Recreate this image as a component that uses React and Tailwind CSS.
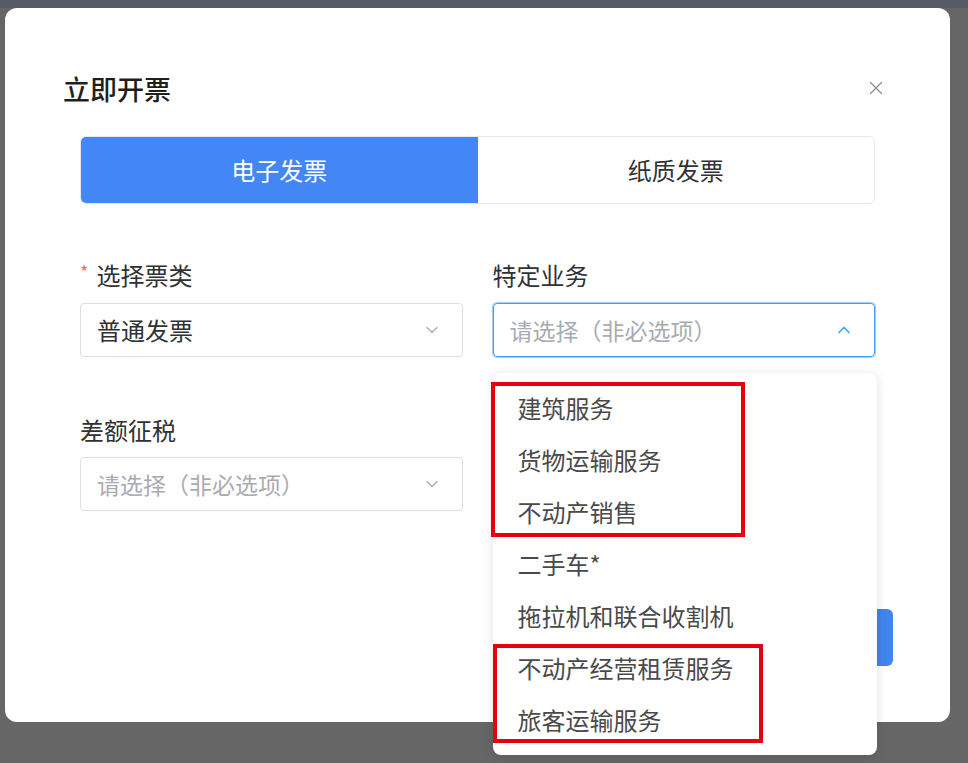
import { ChevronDown, ChevronUp, X } from "lucide-react";

const options = [
  "建筑服务",
  "货物运输服务",
  "不动产销售",
  "二手车*",
  "拖拉机和联合收割机",
  "不动产经营租赁服务",
  "旅客运输服务",
];

function Select({ value, placeholder, open }) {
  return (
    <div
      className={
        open
          ? "h-[54px] rounded-[4px] border border-[#409eff] shadow-[0_0_0_1px_#a0cfff] flex items-center justify-between pl-[16px] pr-[20px]"
          : "h-[54px] rounded-[4px] border border-[#dcdfe6] flex items-center justify-between pl-[16px] pr-[20px]"
      }
    >
      {value ? (
        <span className="text-[24px] leading-none text-[#303133]">{value}</span>
      ) : (
        <span className="text-[23px] leading-none text-[#a8abb2]">{placeholder}</span>
      )}
      {open ? (
        <ChevronUp size={20} strokeWidth={2} className="text-[#409eff]" />
      ) : (
        <ChevronDown size={20} strokeWidth={1.5} className="text-[#a8abb2]" />
      )}
    </div>
  );
}

export default function App() {
  return (
    <div
      className="h-[763px] w-[968px] overflow-hidden bg-[#666666] border-t-[8px] border-[#555c65] pl-[5px]"
      style={{ fontFamily: '"Noto Sans CJK SC", "Noto Sans", sans-serif' }}
    >
      <div className="relative w-[945px] h-[714px] bg-white rounded-[12px] pt-[62px] pl-[75px] pr-[75px]">
        {/* header */}
        <div className="flex items-center justify-between h-[36px]">
          <h1 className="text-[27px] font-medium text-[#1f1f1f] leading-none -ml-[17px]">立即开票</h1>
          <X size={22} strokeWidth={1.5} className="text-[#909399] mr-[-12px]" />
        </div>

        {/* tabs */}
        <div className="mt-[30px] flex h-[68px] rounded-[6px] border border-[#e4e7ed] overflow-hidden">
          <div className="flex-1 bg-[#4287f5] flex items-center justify-center text-white text-[24px]">
            电子发票
          </div>
          <div className="flex-1 bg-white flex items-center justify-center text-[#303133] text-[24px]">
            纸质发票
          </div>
        </div>

        {/* form */}
        <div className="mt-[55px] grid grid-cols-2 gap-x-[30px]">
          <div>
            <div className="h-[32px] flex items-center text-[24px] text-[#303133]">
              <span className="text-[#f56c6c] text-[18px] mr-[8px] -mt-[8px]">*</span>
              选择票类
            </div>
            <div className="mt-[12px]">
              <Select value="普通发票" />
            </div>
          </div>
          <div className="relative">
            <div className="h-[32px] flex items-center text-[24px] text-[#303133]">特定业务</div>
            <div className="mt-[12px]">
              <Select placeholder="请选择（非必选项）" open />
            </div>

            {/* dropdown */}
            <div className="absolute z-10 left-0 top-[114px] w-[384px] bg-white rounded-[8px] shadow-[0_2px_12px_rgba(0,0,0,0.12)] py-[9px]">
              {options.map((o) => (
                <div key={o} className="h-[52px] flex items-center pl-[25px] text-[24px] text-[#4a4a4a]">
                  {o}
                </div>
              ))}
              {/* red annotation boxes */}
              <div className="absolute left-[-2px] top-[9px] w-[254px] h-[155px] border-[4px] border-[#e50012]" />
              <div className="absolute left-0 top-[271px] w-[270px] h-[99px] border-[4px] border-[#e50012]" />
            </div>
          </div>

          <div className="mt-[57px]">
            <div className="h-[32px] flex items-center text-[24px] text-[#303133]">差额征税</div>
            <div className="mt-[11px]">
              <Select placeholder="请选择（非必选项）" />
            </div>
          </div>
        </div>

        {/* footer */}
        <div className="mt-[98px] flex justify-end mr-[-18px]">
          <button className="h-[57px] w-[150px] rounded-[6px] bg-[#3f86ee] text-white text-[24px]">确定</button>
        </div>
      </div>
    </div>
  );
}
